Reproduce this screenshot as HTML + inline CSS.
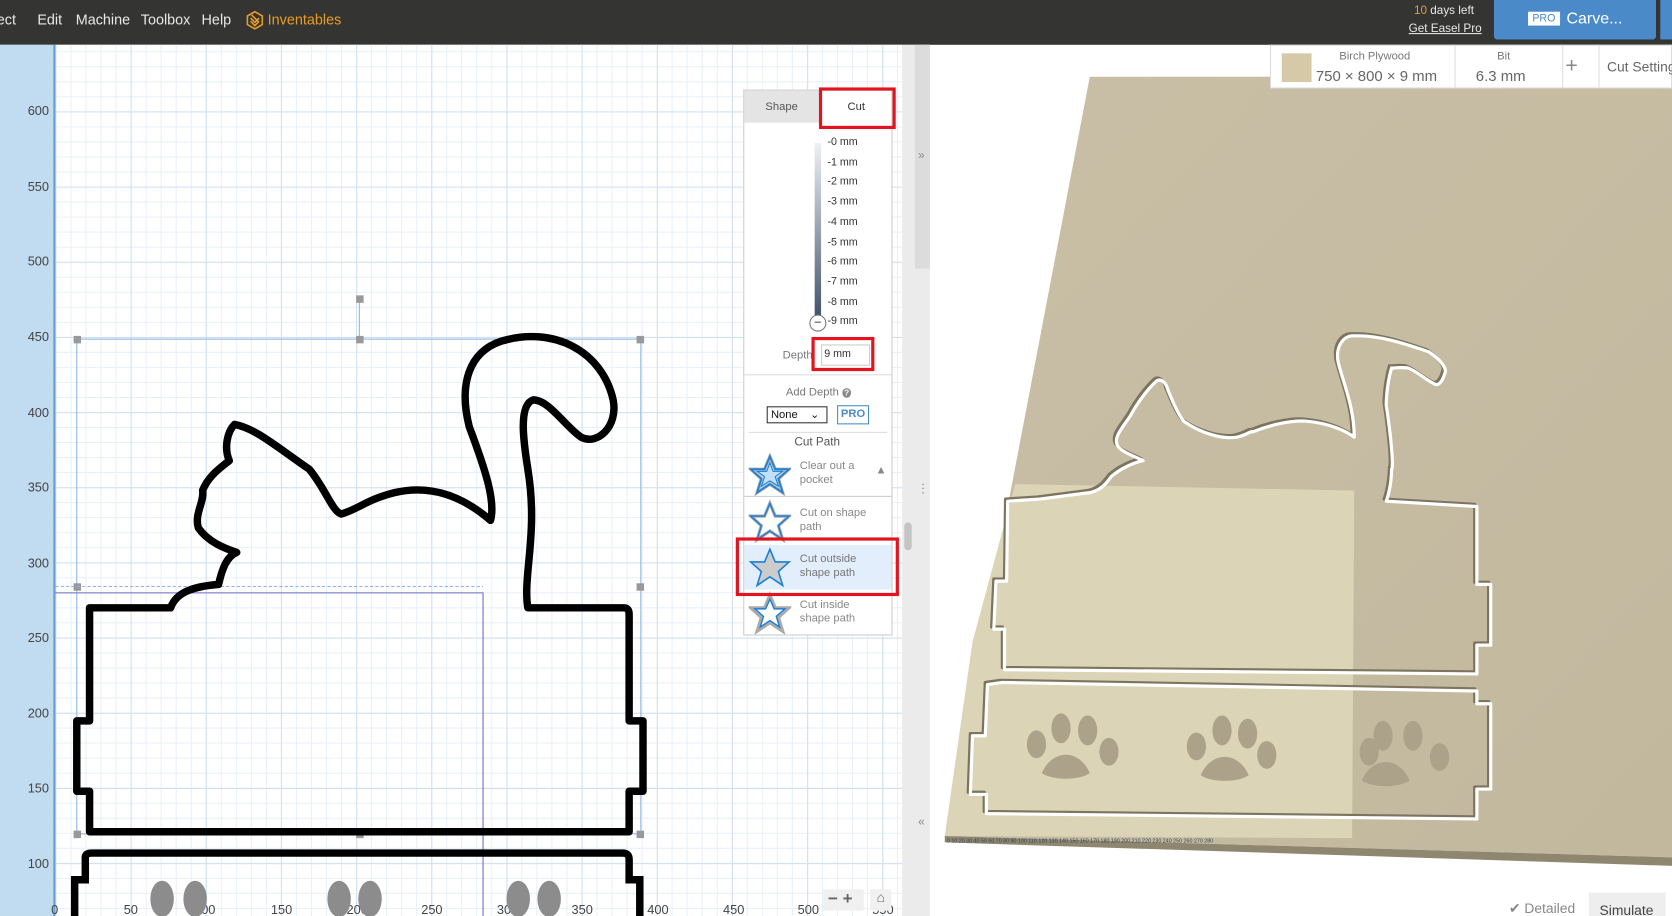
<!DOCTYPE html>
<html><head><meta charset="utf-8"><style>
*{margin:0;padding:0;box-sizing:border-box}
html,body{width:1672px;height:916px;overflow:hidden;background:#fff;font-family:"Liberation Sans",sans-serif}
#s{position:absolute;left:0;top:0;width:1568px;height:859px;transform:scale(1.06633);transform-origin:0 0;overflow:hidden}
.a{position:absolute}
.hd{left:0;top:0;width:1568px;height:42px;background:#343432;color:#e8e8e8;font-size:13.5px}
.hd span{position:absolute;top:11px}
.grid{left:52px;top:42px;width:794px;height:817px;background-color:#fff;
background-image:linear-gradient(#cfe0f1 1px,transparent 1px),linear-gradient(90deg,#cfe0f1 1px,transparent 1px),linear-gradient(#e6eff8 1px,transparent 1px),linear-gradient(90deg,#e6eff8 1px,transparent 1px);
background-size:70.5px 70.5px,70.5px 70.5px,14.1px 14.1px,14.1px 14.1px;background-position:0 -8px,0 0,0 -8px,0 0}
.rl{left:0;top:42px;width:52px;height:817px;background:#c1dbf0;border-right:2px solid #6a9fd0}
.rl span{position:absolute;right:4px;font-size:12px;color:#444}
.xl span{position:absolute;top:846px;font-size:12px;color:#444}
.pn{left:697px;top:84px;width:140px;height:512px;background:#fff;border:1px solid #ccc;font-size:10.5px;color:#777}
.mm{position:absolute;left:78px;font-size:10px;color:#333}
.red{position:absolute;border:3px solid #e3141f}
</style></head><body><div id="s">
<div class="a hd">
<span style="left:-6px">ject</span><span style="left:35px">Edit</span><span style="left:71px">Machine</span><span style="left:132px">Toolbox</span><span style="left:189px">Help</span>
<svg class="a" style="left:231px;top:10px" width="16" height="18" viewBox="0 0 16 18"><path d="M8 1L15 5V13L8 17L1 13V5Z M4 7L8 11L12 7 M4 10L8 14L12 10 M5 4L11 10" fill="none" stroke="#e79c2a" stroke-width="1.5"/></svg>
<span style="left:251px;color:#e79c2a">Inventables</span>
<span style="left:1326px;top:4px;font-size:11px"><b style="color:#e79c2a;font-weight:normal">10</b> days left</span>
<span style="left:1321px;top:21px;font-size:11px;text-decoration:underline">Get Easel Pro</span>
<div class="a" style="left:1401px;top:0;width:152px;height:37px;background:#4a8ac9;border-radius:0 0 3px 3px"><span style="left:32px;top:11px;background:#fff;color:#4a8ac9;font-size:10px;padding:1px 4px">PRO</span><span style="left:68px;top:9px;font-size:15px;color:#fff">Carve...</span></div>
<div class="a" style="left:1557px;top:0;width:11px;height:37px;background:#4a8ac9"></div>
</div>
<div class="a grid"></div>
<div class="a rl"><span style="top:55px">600</span><span style="top:126px">550</span><span style="top:196px">500</span><span style="top:267px">450</span><span style="top:338px">400</span><span style="top:408px">350</span><span style="top:479px">300</span><span style="top:549px">250</span><span style="top:620px">200</span><span style="top:690px">150</span><span style="top:761px">100</span></div>
<div class="xl"><span style="left:48px">0</span><span style="left:116px">50</span><span style="left:182px">100</span><span style="left:254px">150</span><span style="left:325px">200</span><span style="left:395px">250</span><span style="left:466px">300</span><span style="left:536px">350</span><span style="left:607px">400</span><span style="left:678px">450</span><span style="left:748px">500</span><span style="left:818px">550</span></div>
<svg class="a" style="left:0;top:0" width="846" height="859">
<rect x="72" y="318" width="529" height="464" fill="none" stroke="#8fb3e0" stroke-width="1"/>
<line x1="337" y1="281" x2="337" y2="318" stroke="#8fb3e0"/>
<g fill="#999"><rect x="69" y="315" width="7" height="7"/><rect x="334" y="315" width="7" height="7"/><rect x="597" y="315" width="7" height="7"/><rect x="334" y="277" width="7" height="7"/><rect x="69" y="547" width="7" height="7"/><rect x="597" y="547" width="7" height="7"/><rect x="69" y="779" width="7" height="7"/><rect x="334" y="779" width="7" height="7"/><rect x="597" y="779" width="7" height="7"/></g>
<polyline points="52,556 453,556 453,859" fill="none" stroke="#6b6bc8" stroke-width="1"/>
<line x1="52" y1="550" x2="453" y2="550" stroke="#8fb3e0" stroke-dasharray="3,2"/>
<path d="M160,570 C165,556 180,550 205,548 C208,535 212,522 222,518 C210,514 195,508 186,495 C182,482 192,470 190,460 C195,447 205,440 215,432 C210,420 213,405 220,398 C240,402 258,418 290,440 C305,458 312,480 320,482 C335,478 345,468 370,462 C400,455 430,462 460,488 C465,470 455,440 440,400 C430,360 440,330 470,320 C520,305 565,330 575,375 C580,400 560,418 545,410 C530,400 515,375 500,375 C485,380 492,420 495,440 C505,500 490,540 495,570 L585,570 Q590,570 590,576 L590,676 L603,676 L603,742 L590,742 L590,780 L84,780 L84,742 L72,742 L72,676 L84,676 L84,570 Z" fill="none" stroke="#000" stroke-width="7" stroke-linejoin="round"/>
<path d="M70,859 L70,825 L80,825 L80,804 Q80,800 86,800 L584,800 Q590,800 590,806 L590,825 L600,825 L600,859" fill="none" stroke="#000" stroke-width="7"/>
<g fill="#8c8c8c"><ellipse cx="152" cy="843" rx="11" ry="17"/><ellipse cx="183" cy="843" rx="11" ry="17"/><ellipse cx="318" cy="843" rx="11" ry="17"/><ellipse cx="347" cy="843" rx="11" ry="17"/><ellipse cx="486" cy="843" rx="11" ry="17"/><ellipse cx="515" cy="843" rx="11" ry="17"/></g>
</svg>
<div class="a" style="left:772px;top:834px;width:38px;height:20px;background:#f0f0f0;color:#666;font-size:16px;font-weight:bold;line-height:20px">&nbsp;− +</div>
<div class="a" style="left:816px;top:834px;width:20px;height:20px;background:#f0f0f0;color:#666;font-size:13px;text-align:center">⌂</div>
<div class="a pn">
<div class="a" style="left:0;top:0;width:70px;height:30px;background:#e4e4e4;text-align:center;line-height:30px;color:#555">Shape</div>
<div class="a" style="left:70px;top:0;width:70px;height:30px;text-align:center;line-height:30px;color:#333">Cut</div>
<div class="a" style="left:66px;top:49px;width:6px;height:168px;background:linear-gradient(#eef1f5,#3c4e66)"></div>
<div class="a" style="left:61px;top:210px;width:16px;height:16px;border:1.5px solid #777;border-radius:50%;background:#fff;text-align:center;line-height:12px;font-size:12px;color:#333">−</div>
<div class="mm" style="top:43px">-0 mm</div><div class="mm" style="top:62px">-1 mm</div><div class="mm" style="top:80px">-2 mm</div><div class="mm" style="top:99px">-3 mm</div><div class="mm" style="top:118px">-4 mm</div><div class="mm" style="top:137px">-5 mm</div><div class="mm" style="top:155px">-6 mm</div><div class="mm" style="top:174px">-7 mm</div><div class="mm" style="top:193px">-8 mm</div><div class="mm" style="top:211px">-9 mm</div>
<div class="a" style="left:36px;top:242px">Depth</div>
<div class="a" style="left:72px;top:238px;width:46px;height:20px;border:1px solid #ccc;font-size:10px;color:#333;padding:3px 2px">9 mm</div>
<div class="a" style="left:0;top:266px;width:138px;border-top:1px solid #ddd"></div>
<div class="a" style="left:39px;top:277px">Add Depth <b style="background:#888;color:#fff;border-radius:50%;font-size:8px;padding:0 2px">?</b></div>
<div class="a" style="left:21px;top:296px;width:57px;height:16px;border:1px solid #333;font-size:10.5px;color:#111;padding:1px 3px">None &nbsp;&nbsp;&nbsp;⌄</div>
<div class="a" style="left:87px;top:295px;width:30px;height:18px;border:1.5px solid #4a8ac9;color:#4a8ac9;font-size:10.5px;font-weight:bold;text-align:center;line-height:15px">PRO</div>
<div class="a" style="left:4px;top:320px;width:130px;border-top:1px solid #ddd"></div>
<div class="a" style="left:47px;top:324px;color:#555;font-size:11px">Cut Path</div>
<div class="a" style="left:0;top:426px;width:138px;height:42px;background:#e2eefb"></div>
<svg class="a" style="left:4px;top:340px" width="40" height="170" viewBox="0 0 40 170">
<path d="M20 3L25 15L38 15L28 24L32 37L20 29L8 37L12 24L2 15L15 15Z" fill="#bfe0f7" stroke="#aaa" stroke-width="3"/>
<path d="M20 3L25 15L38 15L28 24L32 37L20 29L8 37L12 24L2 15L15 15Z" fill="none" stroke="#1a7fd8" stroke-width="1.5"/>
<path d="M20 9L23 17L32 17L25 22L28 31L20 26L12 31L15 22L8 17L17 17Z" fill="none" stroke="#1a7fd8"/>
<g transform="translate(0,44)"><path d="M20 3L25 15L38 15L28 24L32 37L20 29L8 37L12 24L2 15L15 15Z" fill="#fff" stroke="#aaa" stroke-width="3"/><path d="M20 3L25 15L38 15L28 24L32 37L20 29L8 37L12 24L2 15L15 15Z" fill="none" stroke="#1a7fd8" stroke-width="1.3"/></g>
<g transform="translate(0,87)"><path d="M20 3L25 15L38 15L28 24L32 37L20 29L8 37L12 24L2 15L15 15Z" fill="#ccc" stroke="#1a7fd8" stroke-width="1.5"/></g>
<g transform="translate(0,130)"><path d="M20 3L25 15L38 15L28 24L32 37L20 29L8 37L12 24L2 15L15 15Z" fill="#fff" stroke="#aaa" stroke-width="3"/><path d="M20 7L24 16L34 16L26 23L29 33L20 27L11 33L14 23L6 16L16 16Z" fill="none" stroke="#1a7fd8" stroke-width="1.3"/></g>
</svg>
<div class="a" style="left:52px;top:346px;color:#888;line-height:13px">Clear out a<br>pocket</div><div class="a" style="left:123px;top:350px;color:#888">▲</div>
<div class="a" style="left:0;top:380px;width:138px;border-top:1px solid #ccc"></div>
<div class="a" style="left:52px;top:390px;color:#888;line-height:13px">Cut on shape<br>path</div>
<div class="a" style="left:52px;top:433px;color:#777;line-height:13px">Cut outside<br>shape path</div>
<div class="a" style="left:52px;top:476px;color:#888;line-height:13px">Cut inside<br>shape path</div>
</div>
<div class="red" style="left:768px;top:82px;width:72px;height:39px"></div>
<div class="red" style="left:761px;top:316px;width:59px;height:32px"></div>
<div class="red" style="left:690px;top:504px;width:153px;height:55px"></div>
<div class="a" style="left:846px;top:42px;width:26px;height:817px;background:#ebebeb"></div>
<div class="a" style="left:858px;top:42px;width:14px;height:210px;background:#dcdcdc"></div>
<div class="a" style="left:861px;top:140px;font-size:11px;color:#888">»</div>
<div class="a" style="left:861px;top:765px;font-size:11px;color:#888">«</div>
<div class="a" style="left:864px;top:453px;font-size:10px;color:#666;line-height:4px">·<br>·<br>·</div>
<div class="a" style="left:848px;top:490px;width:7px;height:26px;background:#c4c4c4;border-radius:4px"></div>
<svg class="a" style="left:872px;top:42px" width="696" height="817">
<defs><linearGradient id="w" x1="0" y1="0" x2="1" y2="1"><stop offset="0" stop-color="#c9bfa6"/><stop offset="1" stop-color="#c2b89e"/></linearGradient></defs>
<polygon points="150,30 696,30 696,762 14,742" fill="url(#w)"/>
<polygon points="80,412 398,418 396,744 14,742 40,560" fill="#dcd4b7"/>
<polygon points="14,742 696,762 696,770 14,748" fill="#8f8670"/>
<g fill="none" stroke-linejoin="round">
<g stroke="#7d7460" stroke-width="3" transform="translate(-2,-2)">
<path id="cat" d="M103,426 L150,420 C160,418 165,412 170,405 C178,398 190,392 200,390 C190,385 180,382 176,376 C172,368 180,360 188,348 C195,335 205,322 213,315 C218,313 222,318 223,323 C228,335 232,345 238,353 C255,365 275,370 288,368 C300,365 300,362 303,363 C320,356 340,352 353,353 C375,355 390,362 398,368 C398,340 388,318 383,298 C380,283 388,272 398,273 C420,272 445,280 468,288 C480,296 485,304 483,308 C480,318 476,320 473,318 C462,312 455,305 448,303 C438,302 433,304 433,303 C428,320 428,338 428,338 C433,370 435,398 433,398 C433,415 428,428 428,428 L513,433 L513,506 L526,506 L526,563 L513,563 L513,590 L70,586 L70,548 L60,548 L62,503 L72,503 L73,428 Z"/>
<path id="box" d="M68,598 L513,606 L513,618 L526,618 L526,698 L513,698 L513,726 L53,721 L53,703 L38,703 L40,648 L52,648 L54,600 Z"/>
</g>
<g stroke="#fff" stroke-width="3"><use href="#cat"/><use href="#box"/></g>
</g>
<g fill="#aca189">
<ellipse cx="100" cy="656" rx="9" ry="13"/><ellipse cx="123" cy="641" rx="9" ry="14"/><ellipse cx="148" cy="643" rx="9" ry="14"/><ellipse cx="168" cy="663" rx="9" ry="13"/><path d="M105,683 C115,660 140,660 150,683 C140,690 115,690 105,683Z"/>
<ellipse cx="250" cy="658" rx="9" ry="13"/><ellipse cx="274" cy="643" rx="9" ry="14"/><ellipse cx="298" cy="646" rx="9" ry="14"/><ellipse cx="316" cy="666" rx="9" ry="13"/><path d="M254,685 C264,662 289,662 299,685 C289,692 264,692 254,685Z"/>
<ellipse cx="412" cy="663" rx="9" ry="13"/><ellipse cx="425" cy="648" rx="9" ry="14"/><ellipse cx="453" cy="648" rx="9" ry="14"/><ellipse cx="478" cy="668" rx="9" ry="13"/><path d="M405,690 C415,667 440,667 450,690 C440,697 415,697 405,690Z"/></g>
<g font-size="5" fill="#345"><text x="16" y="748">0 10 20 30 40 50 60 70 80 90 100 110 120 130 140 150 160 170 180 190 200 210 220 230 240 250 260 270 280</text></g>
</svg>
<div class="a" style="left:1191px;top:42px;width:377px;height:41px;background:#fff;border:1px solid #ddd;color:#777">
<div class="a" style="left:10px;top:7px;width:28px;height:27px;background:#d5c9a8"></div>
<div class="a" style="left:64px;top:4px;font-size:10.5px">Birch Plywood</div>
<div class="a" style="left:42px;top:20px;font-size:14px;color:#666">750 × 800 × 9 mm</div>
<div class="a" style="left:172px;top:0;width:1px;height:40px;background:#ddd"></div>
<div class="a" style="left:212px;top:4px;font-size:10.5px">Bit</div>
<div class="a" style="left:192px;top:20px;font-size:14px;color:#666">6.3 mm</div>
<div class="a" style="left:273px;top:0;width:1px;height:40px;background:#ddd"></div>
<div class="a" style="left:276px;top:8px;font-size:20px;color:#888">+</div>
<div class="a" style="left:307px;top:0;width:1px;height:40px;background:#ddd"></div>
<div class="a" style="left:315px;top:12px;font-size:13px;color:#666;white-space:nowrap">Cut Settings</div>
</div>
<div class="a" style="left:1415px;top:844px;font-size:13px;color:#888">✔ Detailed</div>
<div class="a" style="left:1490px;top:837px;width:72px;height:22px;background:#eee;font-size:13px;color:#444;padding:9px 0 0 10px">Simulate</div>
</div></body></html>
